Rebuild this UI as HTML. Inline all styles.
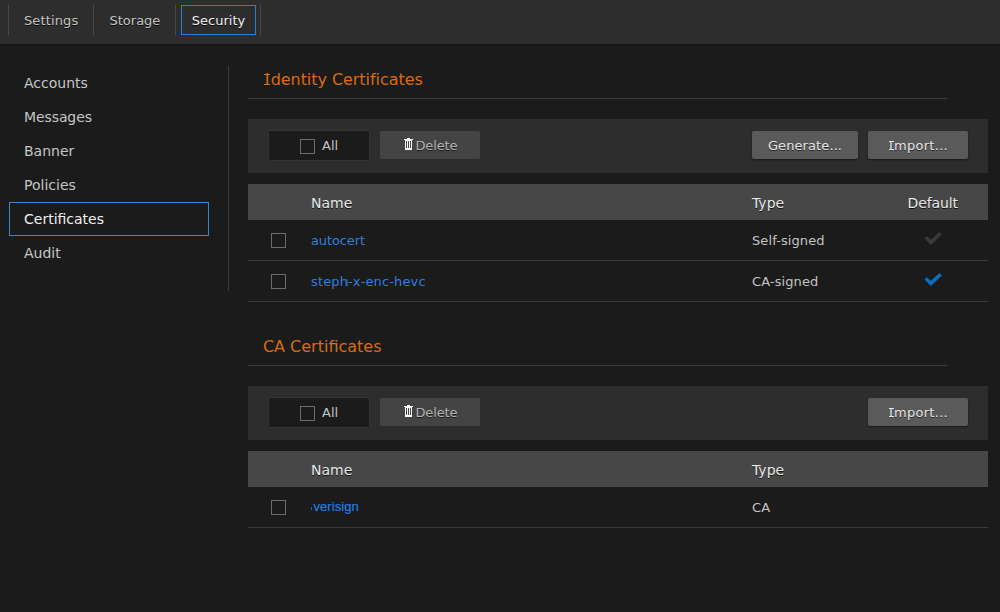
<!DOCTYPE html>
<html lang="en">
<head>
<meta charset="utf-8">
<title>Security - Certificates</title>
<style>
html,body{margin:0;padding:0;}
body{width:1000px;height:612px;overflow:hidden;background:#1b1b1b;font-family:"DejaVu Sans","Liberation Sans",sans-serif;color:#c8c8c8;position:relative;}
.abs{position:absolute;}
#topbar{left:0;top:0;width:1000px;height:45px;background:#2d2d2d;border-bottom:1px solid #151515;box-sizing:border-box;}
.sep{position:absolute;top:5px;width:1px;height:30px;background:#484848;}
.tab{position:absolute;top:6px;height:30px;line-height:30px;text-shadow:0 1px 0 rgba(0,0,0,.75);font-size:13px;color:#c4c4c4;white-space:nowrap;}
.tab.sel{top:5px;box-sizing:border-box;border:1px solid #2a7fd0;color:#f0f0f0;text-align:center;line-height:30px;}
.nav{position:absolute;left:24px;font-size:14px;color:#c6c6c6;white-space:nowrap;line-height:20px;}
#navsel{left:9px;top:202px;width:200px;height:34px;box-sizing:border-box;border:1px solid #3a86cf;}
#vdiv{left:228px;top:66px;width:1px;height:225px;background:#3a3a3a;}
.I{position:relative;display:inline-block;line-height:1;padding:0 .075em;}
.I::before,.I::after{content:"";position:absolute;left:.045em;right:.045em;height:.085em;background:currentColor;}
.I::before{top:.1em;}
.I::after{top:.735em;}
.I.s::before{top:.15em;height:.077em}
.I.s::after{top:.75em;}
.title{position:absolute;left:263.6px;font-size:16px;color:#d96b12;letter-spacing:-0.05px;white-space:nowrap;line-height:24px;}
.hr{position:absolute;left:248px;width:699px;height:1px;background:#3c3c3c;}
.toolbar{position:absolute;left:248px;width:740px;height:54px;background:#2d2d2d;}
.allbox{position:absolute;left:20px;top:11px;width:102px;height:31px;box-sizing:border-box;background:#1b1b1b;border:1px solid #343434;border-radius:2px;}
.cb{position:absolute;width:15px;height:15px;box-sizing:border-box;border:1px solid #6c6c6c;background:#1b1b1b;}
.alltxt{position:absolute;left:53px;top:1px;line-height:28px;font-size:13px;color:#c4c4c4;}
.btn{text-shadow:0 1px 0 rgba(0,0,0,.6);position:absolute;top:12px;height:28px;border-radius:2px;font-size:13px;line-height:30px;text-align:center;white-space:nowrap;}
.trash{position:absolute;left:24px;top:7px;}
.btn.dis .lbl{position:absolute;left:35.5px;top:0px;letter-spacing:-0.15px;}
.btn.dis{background:#444444;color:#b4b4b4;}
.btn.act{background:#5a5a5a;color:#e6e6e6;box-shadow:0 1px 2px rgba(0,0,0,.5);}
.thead{position:absolute;left:248px;width:740px;height:36px;background:#474747;}
.th{position:absolute;top:1px;line-height:36px;text-shadow:0 1px 0 rgba(0,0,0,.75);font-size:14px;color:#e8e8e8;white-space:nowrap;}
.row{position:absolute;left:248px;width:740px;height:40px;border-bottom:1px solid #3a3a3a;}
.row .cb{left:23px;top:13px;}
.name{position:absolute;left:63px;top:1px;line-height:40px;font-size:13px;color:#2f80dc;white-space:nowrap;}
.type{position:absolute;left:504px;top:1px;letter-spacing:0.1px;line-height:40px;font-size:13px;color:#c4c4c4;white-space:nowrap;}
.chk{position:absolute;left:675px;top:11px;width:20px;height:16px;}
</style>
</head>
<body>
<div id="topbar" class="abs">
  <div class="sep" style="left:8px"></div>
  <div class="tab" style="left:24px;letter-spacing:0.12px">Settings</div>
  <div class="sep" style="left:93px"></div>
  <div class="tab" style="left:109.5px">Storage</div>
  <div class="sep" style="left:175px"></div>
  <div class="tab sel" style="left:181px;width:75px">Security</div>
  <div class="sep" style="left:260px"></div>
</div>

<div class="nav" style="top:73px">Accounts</div>
<div class="nav" style="top:107px;letter-spacing:-0.1px">Messages</div>
<div class="nav" style="top:141px">Banner</div>
<div class="nav" style="top:175px">Policies</div>
<div id="navsel" class="abs"></div>
<div class="nav" style="top:209px;color:#f0f0f0">Certificates</div>
<div class="nav" style="top:243px">Audit</div>
<div id="vdiv" class="abs"></div>

<!-- Identity Certificates -->
<div class="title" style="top:68px"><span class="I">I</span>dentity Certificates</div>
<div class="hr" style="top:98px"></div>
<div class="toolbar" style="top:119px">
  <div class="allbox"><div class="cb" style="left:31px;top:8px"></div><div class="alltxt">All</div></div>
  <div class="btn dis" style="left:132px;width:100px"><svg class="trash" width="9" height="12" viewBox="0 0 9 12" shape-rendering="crispEdges"><path d="M3 0h3v1H3zM0 1h9v1H0zM1 2h7v10H1z" fill="#fff"/><path d="M2 3h1v7H2zM4 3h1v7H4zM6 3h1v7H6z" fill="#444"/></svg><span class="lbl">Delete</span></div>
  <div class="btn act" style="left:504px;width:106px;letter-spacing:0.1px">Generate...</div>
  <div class="btn act" style="left:620px;width:100px;letter-spacing:0.27px"><span class="I s">I</span>mport...</div>
</div>
<div class="thead" style="top:184px">
  <div class="th" style="left:63px">Name</div>
  <div class="th" style="left:504px">Type</div>
  <div class="th" style="left:659.5px;letter-spacing:-0.1px">Default</div>
</div>
<div class="row" style="top:220px">
  <div class="cb"></div><div class="name" style="letter-spacing:-0.12px">autocert</div><div class="type">Self-signed</div>
  <svg class="chk" viewBox="0 0 20 16"><path d="M1.5 7.4L3.7 5.2L7.8 8.7L16.4 0.9L18.9 3.5L7.9 14.1z" fill="#393939"/></svg>
</div>
<div class="row" style="top:261px">
  <div class="cb"></div><div class="abs" style="left:99px;top:18px;width:1px;height:8px;background:#1c4678"></div><div class="name" style="letter-spacing:0.13px">steph-x-enc-hevc</div><div class="type">CA-signed</div>
  <svg class="chk" viewBox="0 0 20 16"><path d="M1.5 7.4L3.7 5.2L7.8 8.7L16.4 0.9L18.9 3.5L7.9 14.1z" fill="#096dc0"/></svg>
</div>

<!-- CA Certificates -->
<div class="title" style="top:335px;left:262.9px;letter-spacing:0">CA Certificates</div>
<div class="hr" style="top:365px"></div>
<div class="toolbar" style="top:386px">
  <div class="allbox"><div class="cb" style="left:31px;top:8px"></div><div class="alltxt">All</div></div>
  <div class="btn dis" style="left:132px;width:100px"><svg class="trash" width="9" height="12" viewBox="0 0 9 12" shape-rendering="crispEdges"><path d="M3 0h3v1H3zM0 1h9v1H0zM1 2h7v10H1z" fill="#fff"/><path d="M2 3h1v7H2zM4 3h1v7H4zM6 3h1v7H6z" fill="#444"/></svg><span class="lbl">Delete</span></div>
  <div class="btn act" style="left:620px;width:100px;letter-spacing:0.27px"><span class="I s">I</span>mport...</div>
</div>
<div class="thead" style="top:451px">
  <div class="th" style="left:63px">Name</div>
  <div class="th" style="left:504px">Type</div>
</div>
<div class="row" style="top:487px">
  <div class="cb"></div><div class="abs" style="left:63px;top:20px;width:1px;height:3px;background:#1c68b4"></div><div class="name" style="font-family:'Liberation Sans',sans-serif;left:65.5px;top:0;color:#1f82e8;-webkit-text-stroke:0.15px #1f82e8;letter-spacing:0.05px">verisign</div><div class="type">CA</div>
</div>
</body>
</html>
